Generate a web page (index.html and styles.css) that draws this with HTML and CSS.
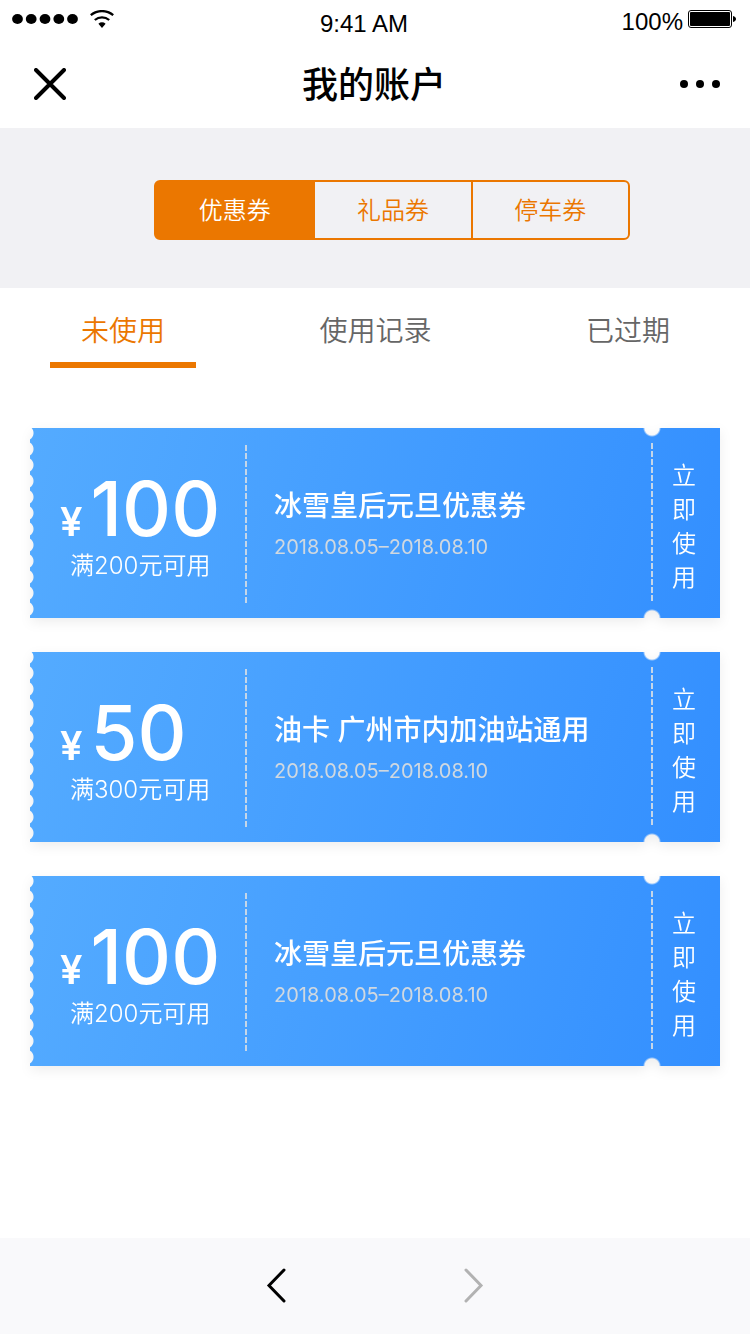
FILE: index.html
```html
<!DOCTYPE html>
<html lang="zh-CN">
<head>
<meta charset="utf-8">
<meta name="viewport" content="width=device-width, initial-scale=1">
<title>我的账户</title>
<link rel="stylesheet" href="styles.css">
</head>
<body>
<header>
  <div class="status">
    <div class="status-left">
      <svg class="signal" width="66" height="10" viewBox="0 0 66 10" aria-hidden="true">
        <ellipse cx="5.5" cy="5" rx="5.4" ry="5"/><ellipse cx="19.2" cy="5" rx="5.4" ry="5"/><ellipse cx="33" cy="5" rx="5.4" ry="5"/><ellipse cx="46.8" cy="5" rx="5.4" ry="5"/><ellipse cx="60.5" cy="5" rx="5.4" ry="5"/>
      </svg>
      <svg class="wifi" width="24" height="18" viewBox="0 0 24 18" aria-hidden="true">
        <path d="M.8 5.2C7.2-.3 16.8-.3 23.2 5.2" fill="none" stroke="#000" stroke-width="2.3"/>
        <path d="M4.8 10C9 6.4 15 6.4 19.2 10" fill="none" stroke="#000" stroke-width="2.3"/>
        <path d="M8.4 13.7C10.5 11.9 13.500 11.900 15.600 13.700L12 18z"/>
      </svg>
    </div>
    <time class="clock">9:41 AM</time>
    <div class="status-right">
      <span>100%</span>
      <svg class="battery" width="48" height="18" viewBox="0 0 48 18" aria-hidden="true">
        <rect x=".5" y=".5" width="43" height="17" rx="2.500" fill="none" stroke="#000"/>
        <rect x="2" y="2" width="40" height="14" rx="1"/>
        <path d="M45 6c4 1 4 5 0 6z"/>
      </svg>
    </div>
  </div>
  <div class="navbar">
    <button class="icon-button" type="button" aria-label="关闭">
      <svg width="32" height="32" viewBox="0 0 32 32"><path d="M2 2L30 30M30 2L2 30" fill="none" stroke="#000" stroke-width="4" stroke-linecap="round"/></svg>
    </button>
    <h1>我的账户</h1>
    <button class="icon-button more" type="button" aria-label="更多">
      <svg width="40" height="8" viewBox="0 0 40 8"><circle cx="4" cy="4" r="4"/><circle cx="20" cy="4" r="4"/><circle cx="36" cy="4" r="4"/></svg>
    </button>
  </div>
</header>
<nav class="kinds" aria-label="券类型">
  <div class="segments">
    <button class="segment active" type="button">优惠券</button>
    <button class="segment" type="button">礼品券</button>
    <button class="segment" type="button">停车券</button>
  </div>
</nav>
<nav class="tabs" aria-label="使用状态">
  <button class="tab active" type="button">未使用</button>
  <button class="tab" type="button">使用记录</button>
  <button class="tab" type="button">已过期</button>
</nav>
<main>
  <ul class="coupons">
    <li class="coupon">
      <div class="ticket">
        <div class="value">
          <p class="amount"><span class="currency">¥</span>100</p>
          <p class="condition">满200元可用</p>
        </div>
        <div class="info">
          <h2>冰雪皇后元旦优惠券</h2>
          <p class="dates">2018.08.05–2018.08.10</p>
        </div>
        <button class="use" type="button">立即使用</button>
      </div>
    </li>
    <li class="coupon">
      <div class="ticket">
        <div class="value">
          <p class="amount"><span class="currency">¥</span>50</p>
          <p class="condition">满300元可用</p>
        </div>
        <div class="info">
          <h2>油卡 广州市内加油站通用</h2>
          <p class="dates">2018.08.05–2018.08.10</p>
        </div>
        <button class="use" type="button">立即使用</button>
      </div>
    </li>
    <li class="coupon">
      <div class="ticket">
        <div class="value">
          <p class="amount"><span class="currency">¥</span>100</p>
          <p class="condition">满200元可用</p>
        </div>
        <div class="info">
          <h2>冰雪皇后元旦优惠券</h2>
          <p class="dates">2018.08.05–2018.08.10</p>
        </div>
        <button class="use" type="button">立即使用</button>
      </div>
    </li>
  </ul>
</main>
<footer class="toolbar">
  <button class="icon-button" type="button" aria-label="后退">
    <svg width="20" height="36" viewBox="0 0 20 36"><path d="M18 3L3 18.500L18 34" fill="none" stroke="#000" stroke-width="3" stroke-linecap="round"/></svg>
  </button>
  <button class="icon-button" type="button" aria-label="前进" disabled>
    <svg width="20" height="36" viewBox="0 0 20 36"><path d="M2 3L17 18.500L2 34" fill="none" stroke="#b2b2b2" stroke-width="3" stroke-linecap="round"/></svg>
  </button>
</footer>
</body>
</html>
```
FILE: styles.css
```css
* {
  box-sizing: border-box;
}

body {
  display: flex;
  flex-direction: column;
  min-height: 100vh;
  margin: 0;
  background: #fff;
  color: #000;
  font-family: "Noto Sans CJK SC", sans-serif;
}

h1, h2, p, ul {
  margin: 0;
  padding: 0;
}

button {
  padding: 0;
  border: 0;
  background: none;
  color: inherit;
  font: inherit;
}

svg {
  display: block;
}

.status {
  display: grid;
  grid-template-columns: 1fr auto 1fr;
  height: 40px;
  padding: 0 14px 0 12px;
  font-family: "Liberation Sans", sans-serif;
  font-size: 24px;
  line-height: 28px;
}

.status-left {
  display: flex;
  align-items: flex-start;
  gap: 12px;
  padding-top: 10px;
}

.signal {
  margin-top: 4px;
}

.clock {
  padding-top: 10px;
  margin-right: 20px;
}

.status-right {
  display: flex;
  justify-content: flex-end;
  gap: 5px;
  padding-top: 8px;
}

.battery {
  margin-top: 2px;
}

.navbar {
  display: flex;
  align-items: center;
  justify-content: space-between;
  height: 88px;
  padding: 0 30px 0 34px;
}

.icon-button {
  flex: none;
}

h1 {
  padding: 0 0 4px 2px;
  font-size: 36px;
  font-weight: 500;
  line-height: 48px;
}

.kinds {
  padding: 52px 120px 48px 154px;
  background: #f1f1f4;
}

.segments {
  display: grid;
  grid-template-columns: repeat(3, 1fr);
  height: 60px;
  border: 2px solid #eb7700;
  border-radius: 6px;
}

.segment {
  padding-bottom: 4px;
  border-left: 2px solid #eb7700;
  color: #eb7700;
  font-size: 24px;
  font-weight: 350;
}

.segment.active {
  background: #eb7700;
  color: #fff;
}

.segment:first-child {
  border-left: 0;
}

.tabs {
  display: flex;
  justify-content: space-between;
  padding: 0 49px 0 50px;
}

.tab {
  width: 146px;
  height: 80px;
  padding-top: 8px;
  border-bottom: 6px solid transparent;
  color: #666;
  font-size: 28px;
  font-weight: 350;
}

.tab.active {
  border-color: #eb7700;
  color: #eb7700;
}

main {
  flex: 1;
  padding: 60px 30px;
}

.coupons {
  display: grid;
  gap: 34px;
  list-style: none;
}

.coupon {
  filter: drop-shadow(0 4px 6px rgba(0, 0, 0, 0.07));
}

.ticket {
  display: flex;
  height: 190px;
  background: linear-gradient(105deg, #54abff, #338fff);
  color: #fff;
  /* Scalloped left edge plus the two round notches above the tear line. */
  mask:
    radial-gradient(circle at -4px 50%, transparent 7px, #000 8px) 0 -3px / 100% 16px,
    radial-gradient(circle at calc(100% - 68px) 0, transparent 7px, #000 9px),
    radial-gradient(circle at calc(100% - 68px) 100%, transparent 7px, #000 9px);
  mask-composite: intersect;
}

.value {
  width: 217px;
  padding: 40px 0 0 30px;
  background: repeating-linear-gradient(#c5d6e8 0 6px, transparent 6px 8px) right 17px / 2px 158px no-repeat;
}

.amount {
  font-family: Inter, sans-serif;
  font-size: 76px;
  font-weight: 500;
  line-height: 80px;
}

.currency {
  margin-right: 8px;
  font-size: 40px;
  font-weight: 600;
  line-height: 40px;
}

.condition {
  padding-left: 10px;
  font-family: Inter, "Noto Sans CJK SC", sans-serif;
  font-size: 24px;
  font-weight: 350;
  line-height: 36px;
}

.info {
  flex: 1;
  padding: 58px 0 0 27px;
}

h2 {
  font-family: Inter, "Noto Sans CJK SC", sans-serif;
  font-size: 28px;
  font-weight: 500;
  line-height: 40px;
}

.dates {
  padding-top: 6px;
  color: #d0d8e0;
  font-family: Inter, sans-serif;
  font-size: 20px;
  font-weight: 400;
  line-height: 30px;
}

.use {
  width: 69px;
  padding: 4px 26px 0 21px;
  background: repeating-linear-gradient(#c5d6e8 0 6px, transparent 6px 8px) left 15px / 2px 158px no-repeat;
  font-size: 24px;
  font-weight: 350;
  line-height: 34px;
  word-break: break-all;
}

.toolbar {
  display: flex;
  align-items: center;
  justify-content: center;
  gap: 178px;
  height: 96px;
  padding-bottom: 2px;
  background: #f9f9fb;
}
```
